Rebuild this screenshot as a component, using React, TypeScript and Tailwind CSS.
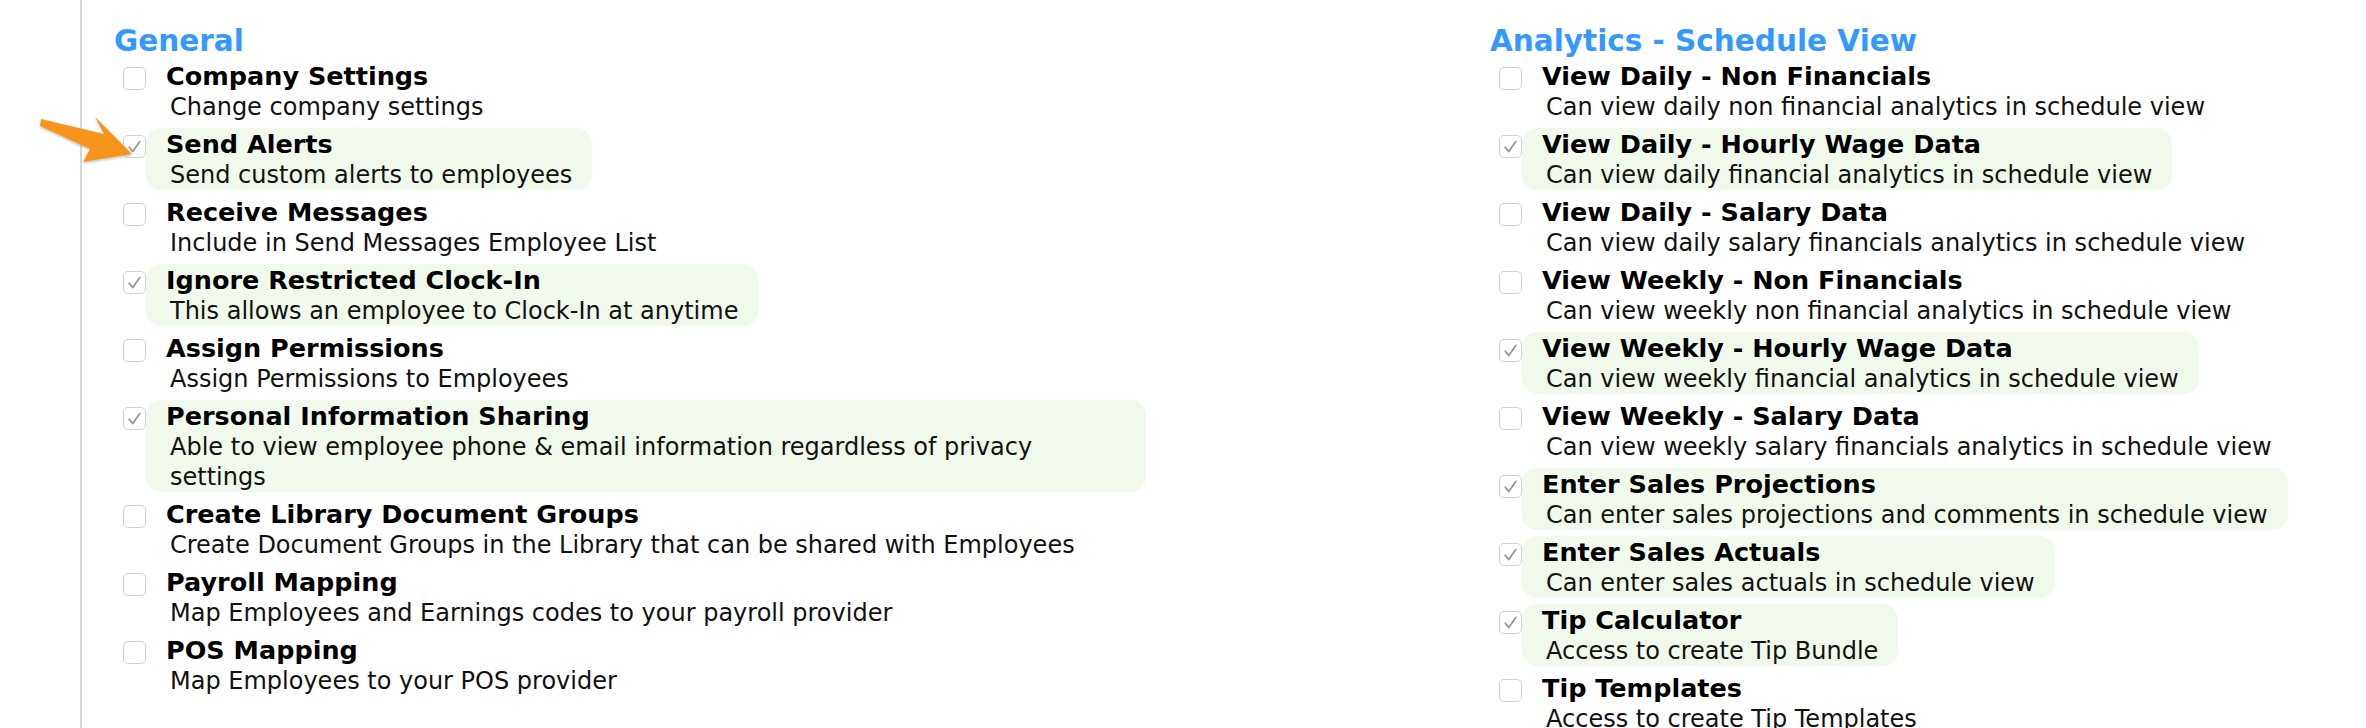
import React from "react";

type Permission = {
  title: string;
  description: string;
  checked: boolean;
};

type PermissionGroup = {
  heading: string;
  items: Permission[];
};

const generalGroup: PermissionGroup = {
  heading: "General",
  items: [
    { title: "Company Settings", description: "Change company settings", checked: false },
    { title: "Send Alerts", description: "Send custom alerts to employees", checked: true },
    { title: "Receive Messages", description: "Include in Send Messages Employee List", checked: false },
    { title: "Ignore Restricted Clock-In", description: "This allows an employee to Clock-In at anytime", checked: true },
    { title: "Assign Permissions", description: "Assign Permissions to Employees", checked: false },
    {
      title: "Personal Information Sharing",
      description: "Able to view employee phone & email information regardless of privacy settings",
      checked: true,
    },
    {
      title: "Create Library Document Groups",
      description: "Create Document Groups in the Library that can be shared with Employees",
      checked: false,
    },
    { title: "Payroll Mapping", description: "Map Employees and Earnings codes to your payroll provider", checked: false },
    { title: "POS Mapping", description: "Map Employees to your POS provider", checked: false },
  ],
};

const analyticsGroup: PermissionGroup = {
  heading: "Analytics - Schedule View",
  items: [
    { title: "View Daily - Non Financials", description: "Can view daily non financial analytics in schedule view", checked: false },
    { title: "View Daily - Hourly Wage Data", description: "Can view daily financial analytics in schedule view", checked: true },
    { title: "View Daily - Salary Data", description: "Can view daily salary financials analytics in schedule view", checked: false },
    { title: "View Weekly - Non Financials", description: "Can view weekly non financial analytics in schedule view", checked: false },
    { title: "View Weekly - Hourly Wage Data", description: "Can view weekly financial analytics in schedule view", checked: true },
    { title: "View Weekly - Salary Data", description: "Can view weekly salary financials analytics in schedule view", checked: false },
    { title: "Enter Sales Projections", description: "Can enter sales projections and comments in schedule view", checked: true },
    { title: "Enter Sales Actuals", description: "Can enter sales actuals in schedule view", checked: true },
    { title: "Tip Calculator", description: "Access to create Tip Bundle", checked: true },
    { title: "Tip Templates", description: "Access to create Tip Templates", checked: false },
  ],
};

function CheckBox({ checked }: { checked: boolean }) {
  return (
    <div className="mt-[7px] flex h-[23px] w-[23px] shrink-0 items-center justify-center rounded-[5px] border border-[#d2d2d2] bg-white">
      {checked ? (
        <svg width="17" height="17" viewBox="0 0 17 17" fill="none">
          <path d="M3.2 9.2 L6.8 13.6 L13.8 3.4" stroke="#949494" strokeWidth="1.7" strokeLinecap="round" strokeLinejoin="round" />
        </svg>
      ) : null}
    </div>
  );
}

function PermissionRow({ item }: { item: Permission }) {
  return (
    <div className="flex items-start pl-[9px]">
      <CheckBox checked={item.checked} />
      <div
        className={`max-w-[1000px] rounded-[15px] pl-[20px] pr-[20px] pt-[1px] ${
          item.checked ? "bg-[#f1f9ec]" : ""
        }`}
      >
        <p className="text-[25.5px] font-bold leading-[31px] text-black">{item.title}</p>
        <p className="pl-[4px] text-[24px] leading-[30px] text-[#111]">{item.description}</p>
      </div>
    </div>
  );
}

function PermissionColumn({ group, className }: { group: PermissionGroup; className?: string }) {
  return (
    <div className={className}>
      <h2 className="mb-[2px] text-[29.5px] font-bold leading-[34px] text-[#3399ff]">{group.heading}</h2>
      <div className="flex flex-col gap-[6px]">
        {group.items.map((item) => (
          <PermissionRow key={item.title} item={item} />
        ))}
      </div>
    </div>
  );
}

// orange callout arrow pointing at the "Send Alerts" checkbox
function PointerArrow() {
  return (
    <svg className="pointer-events-none absolute left-[36px] top-[114px]" width="104" height="54" viewBox="0 0 104 54">
      <defs>
        <filter id="arrowShadow" x="-20%" y="-20%" width="140%" height="160%">
          <feDropShadow dx="0" dy="1.5" stdDeviation="1.2" floodColor="#000" floodOpacity="0.25" />
        </filter>
      </defs>
      <path d="M5 5 L68 20 L59 3 L96 40 L47 48 L54 35 L4 12 Z" fill="#f7941d" filter="url(#arrowShadow)" />
    </svg>
  );
}

export default function App() {
  return (
    <div className="relative flex h-[728px] overflow-hidden bg-white" style={{ fontFamily: '"DejaVu Sans", Verdana, sans-serif' }}>
      <div className="w-[80px] shrink-0" />
      <div className="flex flex-1 border-l-2 border-[#d6d6d6] pl-[32px] pt-[24px]">
        <PermissionColumn group={generalGroup} className="w-[1376px] shrink-0" />
        <PermissionColumn group={analyticsGroup} className="flex-1" />
      </div>
      <PointerArrow />
    </div>
  );
}
